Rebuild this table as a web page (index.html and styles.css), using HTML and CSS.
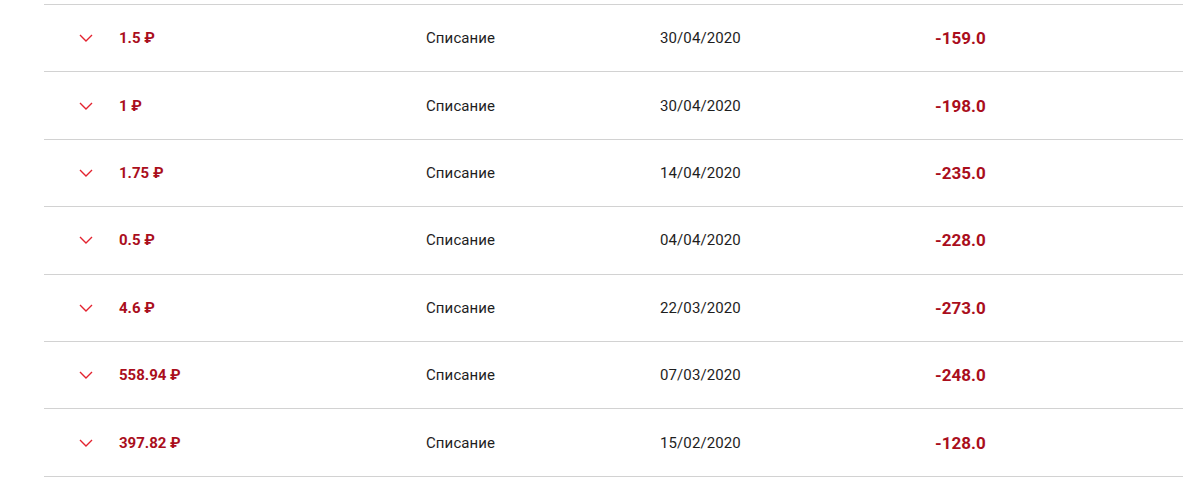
FILE: index.html
```html
<!DOCTYPE html>
<html lang="ru">
<head>
<meta charset="utf-8">
<link rel="stylesheet" href="styles.css">
</head>
<body>
<div class="list">
  <div class="row"><span class="chev"><svg width="14" height="8" viewBox="0 0 14 8"><path d="M1 1l6 6 6-6" fill="none" stroke="#e3232f" stroke-width="1.4"/></svg></span><span class="amount">1.5 ₽</span><span class="desc">Списание</span><span class="date">30/04/2020</span><span class="sum">-159.0</span></div>
  <div class="row"><span class="chev"><svg width="14" height="8" viewBox="0 0 14 8"><path d="M1 1l6 6 6-6" fill="none" stroke="#e3232f" stroke-width="1.4"/></svg></span><span class="amount">1 ₽</span><span class="desc">Списание</span><span class="date">30/04/2020</span><span class="sum">-198.0</span></div>
  <div class="row"><span class="chev"><svg width="14" height="8" viewBox="0 0 14 8"><path d="M1 1l6 6 6-6" fill="none" stroke="#e3232f" stroke-width="1.4"/></svg></span><span class="amount">1.75 ₽</span><span class="desc">Списание</span><span class="date">14/04/2020</span><span class="sum">-235.0</span></div>
  <div class="row"><span class="chev"><svg width="14" height="8" viewBox="0 0 14 8"><path d="M1 1l6 6 6-6" fill="none" stroke="#e3232f" stroke-width="1.4"/></svg></span><span class="amount">0.5 ₽</span><span class="desc">Списание</span><span class="date">04/04/2020</span><span class="sum">-228.0</span></div>
  <div class="row"><span class="chev"><svg width="14" height="8" viewBox="0 0 14 8"><path d="M1 1l6 6 6-6" fill="none" stroke="#e3232f" stroke-width="1.4"/></svg></span><span class="amount">4.6 ₽</span><span class="desc">Списание</span><span class="date">22/03/2020</span><span class="sum">-273.0</span></div>
  <div class="row"><span class="chev"><svg width="14" height="8" viewBox="0 0 14 8"><path d="M1 1l6 6 6-6" fill="none" stroke="#e3232f" stroke-width="1.4"/></svg></span><span class="amount">558.94 ₽</span><span class="desc">Списание</span><span class="date">07/03/2020</span><span class="sum">-248.0</span></div>
  <div class="row"><span class="chev"><svg width="14" height="8" viewBox="0 0 14 8"><path d="M1 1l6 6 6-6" fill="none" stroke="#e3232f" stroke-width="1.4"/></svg></span><span class="amount">397.82 ₽</span><span class="desc">Списание</span><span class="date">15/02/2020</span><span class="sum">-128.0</span></div>
</div>
</body>
</html>
```

FILE: styles.css
```css
* { box-sizing: border-box; }
html, body { margin: 0; padding: 0; background: #fff; }
body { font-family: Roboto, "Noto Sans", sans-serif; overflow: hidden; }
.list {
  margin: 4px 17px 0 44px;
  border-top: 1px solid #d2d2d2;
}
.row {
  display: grid;
  grid-template-columns: 75px 307px 234px 275px 1fr;
  align-items: center;
  height: 67.4px;
  border-bottom: 1px solid #d2d2d2;
}
.chev { display: flex; padding-left: 35px; }
.chev svg { display: block; }
.amount { font-size: 15px; font-weight: 700; color: #aa0e1c; }
.desc, .date { font-size: 15px; color: #1e1e1e; letter-spacing: 0.1px; }
.sum { font-size: 17px; font-weight: 700; color: #aa0e1c; }
```
